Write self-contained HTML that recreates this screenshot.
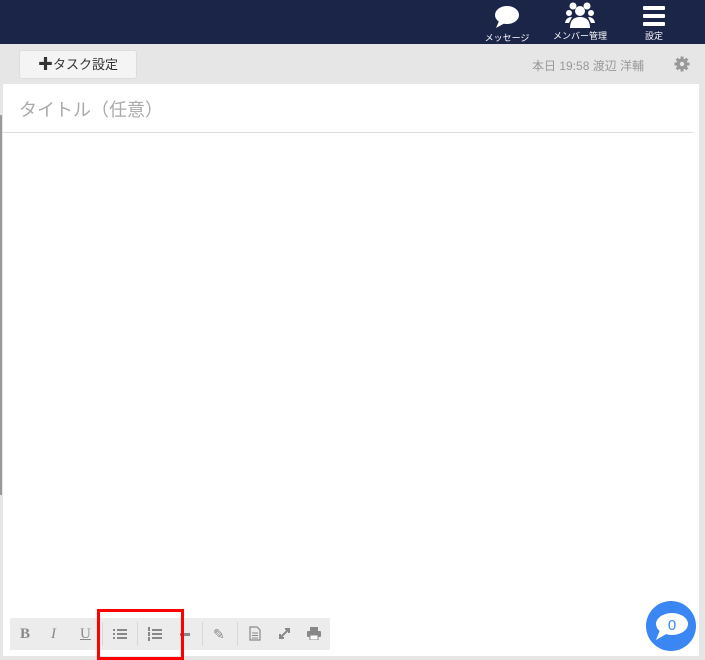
<!DOCTYPE html>
<html><head><meta charset="utf-8"><style>
*{margin:0;padding:0;box-sizing:border-box}
body{width:705px;height:660px;overflow:hidden;background:#e6e6e6;font-family:"Liberation Sans","Noto Sans CJK JP",sans-serif;position:relative}
.hdr{position:absolute;left:0;top:0;width:705px;height:44px;background:#1b2548}
.nav{position:absolute;top:0;color:#fff;font-size:9px;text-align:center}
.btn{position:absolute;left:19px;top:50px;width:118px;height:29px;background:#f4f4f4;border:1px solid #ddd;border-radius:3px;font-size:13px;color:#333;text-align:center;line-height:27px}
.meta{position:absolute;left:532px;top:57px;font-size:12px;color:#999}
.panel{position:absolute;left:3px;top:84px;width:696px;height:572px;background:#fff}
.title{position:absolute;left:19px;top:96px;font-size:18px;color:#aaa}
.line{position:absolute;left:3px;top:132px;width:690px;height:1px;background:#ddd}
.tb{position:absolute;left:10px;top:618px;width:320px;height:32px;background:#ececec}
.tb span{position:absolute;top:0;line-height:32px;color:#888;font-size:14px}
.sep{position:absolute;top:4px;width:1px;height:24px;background:#d8d8d8}
.red{position:absolute;left:97px;top:609px;width:87px;height:51px;border:3px solid #f00}
</style></head><body>
<div class="hdr"></div>
<div class="nav" style="left:478px;width:58px">
<svg width="28" height="26" viewBox="0 0 28 26" style="margin-top:4px"><ellipse cx="14" cy="11" rx="12" ry="9" fill="#fff"/><path d="M6 17 L3 24 L12 19Z" fill="#fff"/></svg><div style="margin-top:-1px">メッセージ</div></div>
<div class="nav" style="left:548px;width:64px">
<svg width="30" height="28" viewBox="0 0 30 28" style="margin-top:1px"><g fill="#fff"><circle cx="8" cy="5" r="3.5"/><circle cx="22" cy="5" r="3.5"/><circle cx="4" cy="12" r="3"/><circle cx="26" cy="12" r="3"/><circle cx="15" cy="10" r="5"/><path d="M5 27 Q5 16 15 16 Q25 16 25 27Z"/><path d="M0 22 Q1 16 7 16 L4 22Z"/><path d="M30 22 Q29 16 23 16 L26 22Z"/></g></svg><div style="margin-top:-2px">メンバー管理</div></div>
<div class="nav" style="left:638px;width:32px">
<svg width="24" height="22" viewBox="0 0 24 22" style="margin-top:5px"><g fill="#fff"><rect x="1" y="1" width="22" height="4" rx="1"/><rect x="1" y="9" width="22" height="4" rx="1"/><rect x="1" y="17" width="22" height="4" rx="1"/></g></svg><div style="margin-top:0">設定</div></div>
<div class="btn"><b style="font-size:15px">✚</b>タスク設定</div>
<div class="meta">本日 19:58 渡辺 洋輔</div>
<svg style="position:absolute;left:674px;top:56px" width="16" height="16" viewBox="0 0 16 16"><g fill="#999"><circle cx="8" cy="8" r="5.5"/><rect x="6.5" y="0.5" width="3" height="15"/><rect x="0.5" y="6.5" width="15" height="3"/><rect x="6.5" y="0.5" width="3" height="15" transform="rotate(45 8 8)"/><rect x="6.5" y="0.5" width="3" height="15" transform="rotate(-45 8 8)"/></g><circle cx="8" cy="8" r="2.2" fill="#e6e6e6"/></svg>
<div class="panel"></div>
<div style="position:absolute;left:0;top:115px;width:2px;height:380px;background:#999"></div>
<div class="title">タイトル（任意）</div>
<div class="line"></div>
<div class="tb">
<span style="left:10px;font-family:'Liberation Serif';font-weight:bold;font-size:15px">B</span>
<span style="left:41px;font-family:'Liberation Serif';font-style:italic;font-size:15px">I</span>
<span style="left:70px;font-family:'Liberation Serif';text-decoration:underline;font-size:15px">U</span>
<div class="sep" style="left:92px"></div>
<svg style="position:absolute;left:103px;top:10px" width="14" height="12"><g fill="#888"><rect x="0" y="1" width="2" height="2"/><rect x="0" y="5" width="2" height="2"/><rect x="0" y="9" width="2" height="2"/><rect x="4" y="1" width="10" height="2"/><rect x="4" y="5" width="10" height="2"/><rect x="4" y="9" width="10" height="2"/></g></svg>
<div class="sep" style="left:127px"></div>
<svg style="position:absolute;left:138px;top:9px" width="14" height="14"><g fill="#888"><rect x="0" y="0" width="2" height="4"/><rect x="0" y="5" width="2" height="4"/><rect x="0" y="10" width="2" height="4"/><rect x="4" y="2" width="10" height="2"/><rect x="4" y="6" width="10" height="2"/><rect x="4" y="10" width="10" height="2"/></g></svg>
<svg style="position:absolute;left:170px;top:15px" width="10" height="3"><rect width="10" height="3" fill="#888"/></svg>
<div class="sep" style="left:192px"></div>
<span style="left:203px;font-size:14px">✎</span>
<div class="sep" style="left:227px"></div>
<svg style="position:absolute;left:239px;top:8px" width="12" height="15"><path d="M1 1H8L11 4V14H1Z" fill="none" stroke="#888" stroke-width="1.2"/><path d="M3 7H9M3 9.5H9M3 12H9" stroke="#888"/></svg>
<svg style="position:absolute;left:268px;top:9px" width="13" height="13"><path d="M2 11L11 2M7 2H11V6M2 7V11H6" fill="none" stroke="#888" stroke-width="2"/></svg>
<svg style="position:absolute;left:297px;top:9px" width="14" height="13"><rect x="3" y="0" width="8" height="4" fill="#888"/><rect x="0" y="4" width="14" height="6" rx="1" fill="#888"/><rect x="3" y="8" width="8" height="5" fill="#fff" stroke="#888"/></svg>
</div>
<div class="red"></div>
<svg style="position:absolute;left:646px;top:601px" width="50" height="50" viewBox="0 0 50 50"><circle cx="25" cy="25" r="25" fill="#3a86f2"/><ellipse cx="26" cy="23" rx="16" ry="11" fill="#fff"/><path d="M14 29L10 39L22 32Z" fill="#fff"/><text x="26" y="29" font-size="15" fill="#3a86f2" text-anchor="middle" font-family="Liberation Sans">0</text></svg>
</body></html>
